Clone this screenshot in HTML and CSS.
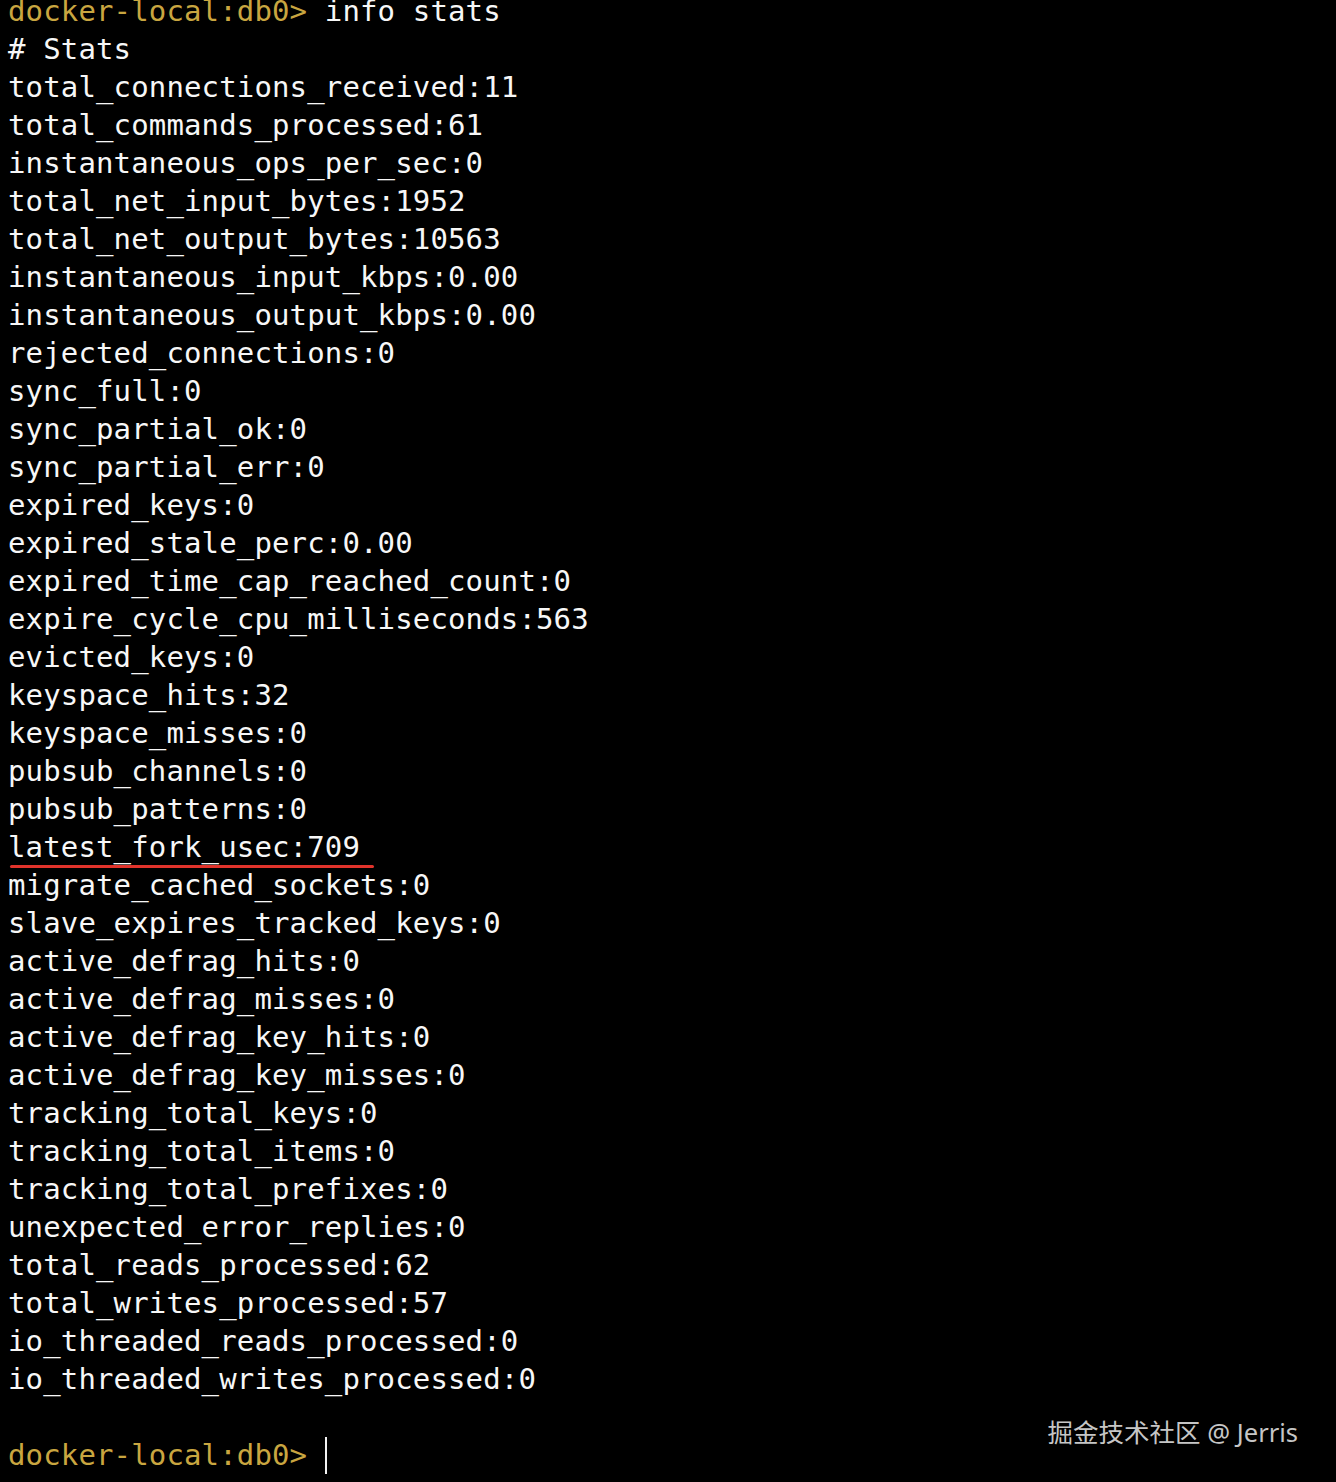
FILE: index.html
```html
<!DOCTYPE html>
<html lang="en">
<head>
<meta charset="utf-8">
<title>redis-cli info stats</title>
<link rel="stylesheet" href="styles.css">
</head>
<body>
<main class="terminal">
  <div class="line"><span class="prompt">docker-local:db0&gt;</span> info stats</div>
  <div class="line"># Stats</div>
  <div class="line">total_connections_received:11</div>
  <div class="line">total_commands_processed:61</div>
  <div class="line">instantaneous_ops_per_sec:0</div>
  <div class="line">total_net_input_bytes:1952</div>
  <div class="line">total_net_output_bytes:10563</div>
  <div class="line">instantaneous_input_kbps:0.00</div>
  <div class="line">instantaneous_output_kbps:0.00</div>
  <div class="line">rejected_connections:0</div>
  <div class="line">sync_full:0</div>
  <div class="line">sync_partial_ok:0</div>
  <div class="line">sync_partial_err:0</div>
  <div class="line">expired_keys:0</div>
  <div class="line">expired_stale_perc:0.00</div>
  <div class="line">expired_time_cap_reached_count:0</div>
  <div class="line">expire_cycle_cpu_milliseconds:563</div>
  <div class="line">evicted_keys:0</div>
  <div class="line">keyspace_hits:32</div>
  <div class="line">keyspace_misses:0</div>
  <div class="line">pubsub_channels:0</div>
  <div class="line">pubsub_patterns:0</div>
  <div class="line marked">latest_fork_usec:709<span class="mark"></span></div>
  <div class="line">migrate_cached_sockets:0</div>
  <div class="line">slave_expires_tracked_keys:0</div>
  <div class="line">active_defrag_hits:0</div>
  <div class="line">active_defrag_misses:0</div>
  <div class="line">active_defrag_key_hits:0</div>
  <div class="line">active_defrag_key_misses:0</div>
  <div class="line">tracking_total_keys:0</div>
  <div class="line">tracking_total_items:0</div>
  <div class="line">tracking_total_prefixes:0</div>
  <div class="line">unexpected_error_replies:0</div>
  <div class="line">total_reads_processed:62</div>
  <div class="line">total_writes_processed:57</div>
  <div class="line">io_threaded_reads_processed:0</div>
  <div class="line">io_threaded_writes_processed:0</div>
  <div class="line blank"></div>
  <div class="line"><span class="prompt">docker-local:db0&gt;</span> <span class="cursor"></span></div>
</main>
<div class="watermark">掘金技术社区 @ Jerris</div>
</body>
</html>
```
FILE: styles.css
```css
html, body {
  margin: 0;
  padding: 0;
  background: #000;
  height: 100%;
}
body {
  position: relative;
  overflow: hidden;
}
.terminal {
  margin-top: -8px;
  padding-left: 8px;
  font-family: "DejaVu Sans Mono", "Liberation Mono", monospace;
  font-size: 29px;
  letter-spacing: 0.14px;
  line-height: 38px;
  color: #f7f7f7;
}
.line {
  height: 38px;
  white-space: pre;
}
.prompt {
  color: #c9a640;
}
.marked {
  position: relative;
}
.mark {
  position: absolute;
  left: 2px;
  top: 37px;
  width: 364px;
  height: 3px;
  border-radius: 2px;
  background: #e1332b;
}
.cursor {
  display: inline-block;
  width: 2px;
  height: 37px;
  background: #f2f2f2;
  vertical-align: -9px;
}
.watermark {
  position: absolute;
  right: 38px;
  bottom: 35px;
  font-family: "Noto Sans", "Noto Sans CJK SC", sans-serif;
  font-size: 25.5px;
  line-height: 30px;
  color: #c6c6c6;
}
```
